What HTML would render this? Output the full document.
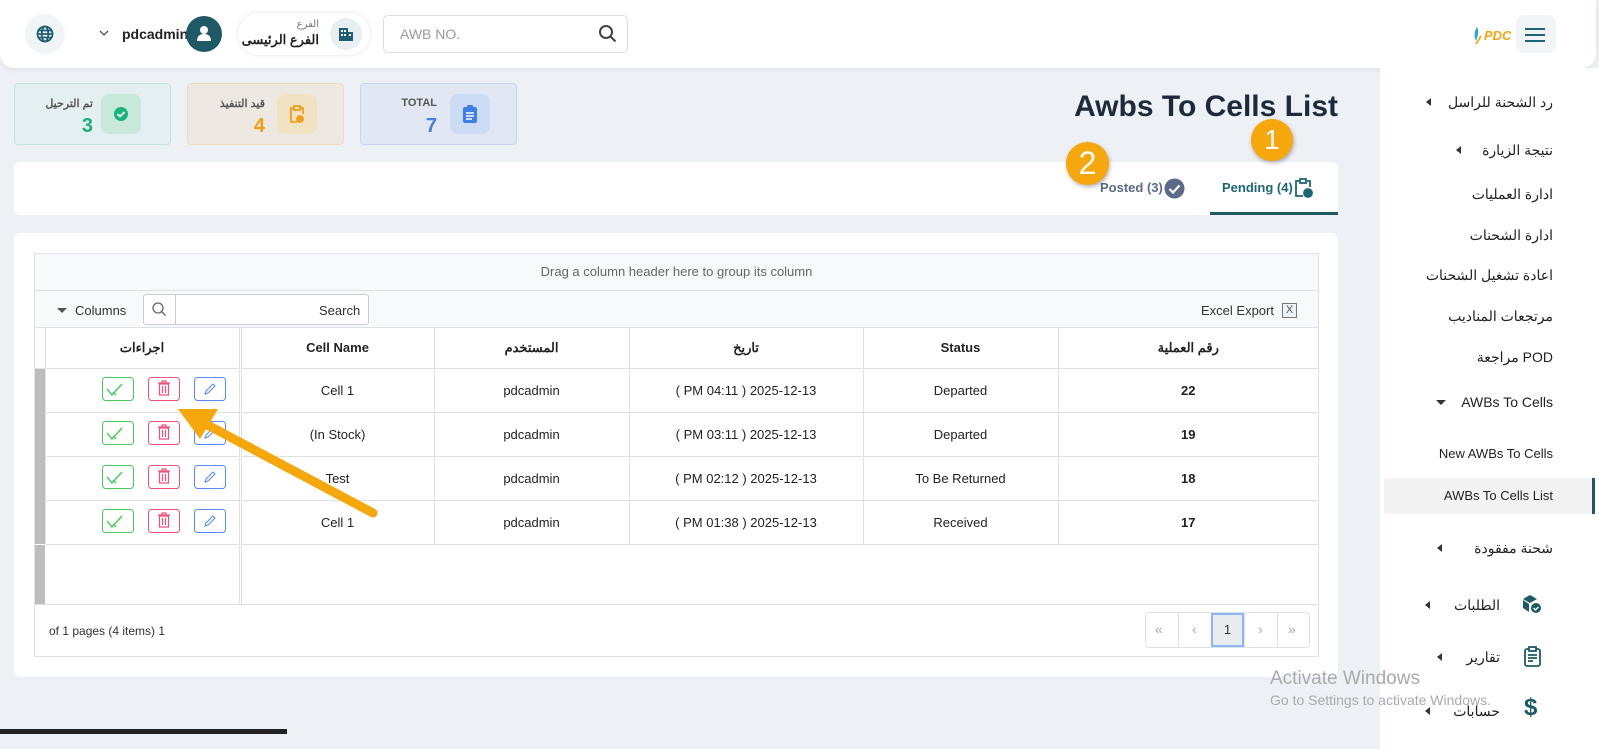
<!DOCTYPE html>
<html><head><meta charset="utf-8"><style>
*{box-sizing:border-box;margin:0;padding:0}
body{width:1599px;height:749px;overflow:hidden;background:#edf0f5;font-family:"Liberation Sans","Noto Sans CJK SC",sans-serif;position:relative;color:#222}
.a{position:absolute}
.hdr{left:0;top:0;width:1596px;height:68px;background:#fff;border-radius:0 0 14px 14px;box-shadow:0 2px 6px rgba(0,0,0,.06)}
.side{left:1380px;top:68px;width:219px;height:681px;background:#fff}
.mi{position:absolute;right:46px;font-size:14px;color:#222;white-space:nowrap}
.tri{position:absolute;width:0;height:0;border-top:4px solid transparent;border-bottom:4px solid transparent;border-right:5px solid #333}
.card{border-radius:4px;height:62px;top:83px;width:157px}
.lbl{font-size:11px;font-weight:bold;color:#555;text-align:right}
.val{font-size:20px;font-weight:bold;text-align:right}
.ib{position:absolute;width:40px;height:40px;border-radius:8px;top:11px}
.grid td,.grid th{border-right:1px solid #dee2e6;border-bottom:1px solid #dee2e6;text-align:center;font-size:13px}
</style></head><body>
<div class="a hdr"></div>
<div class="a" style="left:25px;top:14px;width:40px;height:40px;border-radius:50%;background:#f1f5f7"></div>
<svg class="a" style="left:36px;top:25px" width="18" height="18" viewBox="0 0 18 18" fill="none" stroke="#1f5f73" stroke-width="1.8"><circle cx="9" cy="9" r="7.5"/><ellipse cx="9" cy="9" rx="3.3" ry="7.5"/><path d="M1.5 9h15M2.5 5.5h13M2.5 12.5h13"/></svg>
<svg class="a" style="left:99px;top:30px" width="10" height="7"><path d="M1 1l4 4 4-4" fill="none" stroke="#555" stroke-width="1.3"/></svg>
<div class="a" style="left:122px;top:26px;font-size:14px;font-weight:bold">pdcadmin</div>
<div class="a" style="left:186px;top:16px;width:36px;height:36px;border-radius:50%;background:#1d5a66"></div>
<svg class="a" style="left:196px;top:25px" width="16" height="17"><circle cx="8" cy="5" r="4" fill="#fff"/><path d="M1 16c0-5 3-7 7-7s7 2 7 7z" fill="#fff"/></svg>
<div class="a" style="left:238px;top:13px;width:132px;height:42px;border-radius:21px;background:#fff;box-shadow:0 0 4px rgba(0,0,0,.12)"></div>
<div class="a" style="left:248px;top:19px;width:71px;text-align:right;font-size:10px;color:#777">الفرع</div>
<div class="a" style="left:240px;top:32px;width:79px;text-align:right;font-size:13px;font-weight:bold">الفرع الرئيسى</div>
<div class="a" style="left:330px;top:18px;width:32px;height:32px;border-radius:50%;background:#e7eff3"></div>
<svg class="a" style="left:339px;top:27px" width="14" height="14"><rect x="0" y="1" width="9" height="13" fill="#1f5f73"/><rect x="9" y="5" width="5" height="9" fill="#1f5f73"/><g fill="#fff"><rect x="2" y="3" width="2" height="2"/><rect x="5" y="3" width="2" height="2"/><rect x="2" y="7" width="2" height="2"/><rect x="5" y="7" width="2" height="2"/><rect x="10" y="7" width="2" height="2"/></g></svg>
<div class="a" style="left:383px;top:15px;width:245px;height:38px;border:1px solid #ddd;border-radius:5px;background:#fff"></div>
<div class="a" style="left:400px;top:26px;font-size:14px;color:#999">AWB NO.</div>
<svg class="a" style="left:598px;top:24px" width="19" height="19" fill="none" stroke="#444" stroke-width="2"><circle cx="8" cy="8" r="6"/><path d="M12.5 12.5l5 5"/></svg>
<svg class="a" style="left:1472px;top:26px" width="25" height="20"><path d="M5 1C2 5 2 11 4 15 6 10 7 5 5 1z" fill="#2aa8cf"/><path d="M3 18l5-8h2l-5 8z" fill="#f2a612"/></svg>
<div class="a" style="left:1484px;top:28px;font-size:13px;font-weight:bold;font-style:italic;color:#f2a612">PDC</div>
<div class="a" style="left:1516px;top:15px;width:40px;height:38px;border-radius:8px;background:#f1f5f7"></div>
<div class="a" style="left:1525px;top:28px;width:20px;height:2px;background:#1d6675;box-shadow:0 6px 0 #1d6675,0 12px 0 #1d6675"></div>

<!-- stat cards -->
<div class="a card" style="left:14px;background:#e3eff0;border:1px solid #bfe6d9"></div>
<div class="a lbl" style="left:20px;top:97px;width:73px">تم الترحيل</div>
<div class="a val" style="left:20px;top:115px;width:73px;color:#1bae7a">3</div>
<div class="ib" style="left:101px;top:94px;background:#c9e8dc"></div>
<svg class="a" style="left:113px;top:106px" width="16" height="16"><circle cx="8" cy="8" r="7" fill="#19b37c"/><path d="M4.5 8l2.5 2.5 4.5-4.5" stroke="#fff" stroke-width="1.8" fill="none"/></svg>
<div class="a card" style="left:187px;background:#ede9e2;border:1px solid #f0dcb8"></div>
<div class="a lbl" style="left:190px;top:97px;width:75px">قيد التنفيذ</div>
<div class="a val" style="left:190px;top:115px;width:75px;color:#f29d14">4</div>
<div class="ib" style="left:277px;top:94px;background:#f2e2c4"></div>
<svg class="a" style="left:290px;top:105px" width="14" height="18" fill="none" stroke="#f29d14" stroke-width="1.8"><path d="M4 3H1v14h6M10 3h3v6"/><rect x="4" y="1" width="6" height="4"/><circle cx="10" cy="14" r="3" fill="#f29d14"/></svg>
<div class="a card" style="left:360px;background:#e2e8f3;border:1px solid #c5d6f3"></div>
<div class="a lbl" style="left:365px;top:97px;width:72px">TOTAL</div>
<div class="a val" style="left:365px;top:115px;width:72px;color:#3f7fe6">7</div>
<div class="ib" style="left:450px;top:94px;background:#ccdcf5"></div>
<svg class="a" style="left:463px;top:105px" width="14" height="18"><rect x="0" y="2" width="14" height="16" rx="2" fill="#3f7fe6"/><rect x="4" y="0" width="6" height="4" rx="1" fill="#3f7fe6"/><path d="M3 8h8M3 11h8M3 14h6" stroke="#fff" stroke-width="1.4"/></svg>

<div class="a" style="right:261px;top:90px;font-size:30px;font-weight:bold;color:#1e2a3b">Awbs To Cells List</div>

<!-- tabs -->
<div class="a" style="left:14px;top:162px;width:1324px;height:53px;background:#fff;border-radius:6px"></div>
<div class="a" style="left:1210px;top:212px;width:128px;height:3px;background:#1d5a66"></div>
<div class="a" style="left:1222px;top:180px;font-size:13px;font-weight:bold;color:#1d6675">Pending (4)</div>
<svg class="a" style="left:1295px;top:178px" width="18" height="20" fill="none" stroke="#1d6675" stroke-width="1.8"><path d="M4 3H1v15h7M12 3h3v6"/><rect x="5" y="1" width="6" height="4"/><circle cx="13" cy="15" r="4" fill="#1d6675"/></svg>
<div class="a" style="left:1100px;top:180px;font-size:13px;font-weight:bold;color:#5b6a8a">Posted (3)</div>
<svg class="a" style="left:1164px;top:178px" width="21" height="21"><circle cx="10.5" cy="10.5" r="10" fill="#5b6a8a"/><path d="M5.5 11l3.5 3.5 6.5-7" stroke="#fff" stroke-width="2.2" fill="none"/></svg>
<div class="a" style="left:1251px;top:119px;width:42px;height:42px;border-radius:50%;background:#f5a70c;box-shadow:1px 2px 4px rgba(0,0,0,.3);color:#fff;font-size:28px;text-align:center;line-height:42px">1</div>
<div class="a" style="left:1066px;top:142px;width:43px;height:43px;border-radius:50%;background:#f5a70c;box-shadow:1px 2px 4px rgba(0,0,0,.3);color:#fff;font-size:32px;text-align:center;line-height:43px">2</div>

<!-- grid -->
<div class="a" style="left:14px;top:233px;width:1324px;height:444px;background:#fff;border-radius:6px"></div>
<div class="a" style="left:34px;top:253px;width:1285px;height:404px;border:1px solid #dee2e6;background:#fff"></div>
<div class="a" style="left:35px;top:254px;width:1283px;height:74px;background:#f8f9fa;border-bottom:1px solid #dee2e6"></div>
<div class="a" style="left:35px;top:290px;width:1283px;height:1px;background:#dee2e6"></div>
<div class="a" style="left:35px;top:264px;width:1283px;text-align:center;font-size:13px;color:#666">Drag a column header here to group its column</div>
<div class="a" style="left:57px;top:308px;border-left:5px solid transparent;border-right:5px solid transparent;border-top:5px solid #555"></div>
<div class="a" style="left:75px;top:303px;font-size:13px;color:#333">Columns</div>
<div class="a" style="left:143px;top:294px;width:226px;height:31px;border:1px solid #ccc;border-radius:3px;background:#fff"></div>
<div class="a" style="left:175px;top:295px;width:1px;height:29px;background:#ccc"></div>
<svg class="a" style="left:152px;top:302px" width="15" height="15" fill="none" stroke="#666" stroke-width="1.3"><circle cx="6" cy="6" r="5"/><path d="M9.5 9.5l4 4"/></svg>
<div class="a" style="left:319px;top:303px;font-size:13px;color:#333">Search</div>
<div class="a" style="left:1201px;top:303px;font-size:13px;color:#333">Excel Export</div>
<div class="a" style="left:1282px;top:303px;width:15px;height:15px;border:1px solid #777;font-size:11px;text-align:center;line-height:13px;color:#555;background:#eef3f8">X</div>
<table class="a grid" style="left:35px;top:328px;width:1283px;border-collapse:collapse">
<tr style="height:40px"><th style="width:10px"></th><th style="width:195px;border-right:3px double #dee2e6">اجراءات</th><th style="width:194px">Cell Name</th><th style="width:195px">المستخدم</th><th style="width:234px">تاريخ</th><th style="width:195px">Status</th><th style="border-right:0">رقم العملية</th></tr>
<tr style="height:44px"><td style="background:#bdbdbd;border-bottom:0"></td><td style="border-right:3px double #dee2e6"></td><td>Cell 1</td><td>pdcadmin</td><td>( PM 04:11 ) 2025-12-13</td><td>Departed</td><td style="border-right:0;font-weight:bold">22</td></tr>
<tr style="height:44px"><td style="background:#bdbdbd;border-bottom:0"></td><td style="border-right:3px double #dee2e6"></td><td>(In Stock)</td><td>pdcadmin</td><td>( PM 03:11 ) 2025-12-13</td><td>Departed</td><td style="border-right:0;font-weight:bold">19</td></tr>
<tr style="height:44px"><td style="background:#bdbdbd;border-bottom:0"></td><td style="border-right:3px double #dee2e6"></td><td>Test</td><td>pdcadmin</td><td>( PM 02:12 ) 2025-12-13</td><td>To Be Returned</td><td style="border-right:0;font-weight:bold">18</td></tr>
<tr style="height:44px"><td style="background:#bdbdbd;border-bottom:0"></td><td style="border-right:3px double #dee2e6"></td><td>Cell 1</td><td>pdcadmin</td><td>( PM 01:38 ) 2025-12-13</td><td>Received</td><td style="border-right:0;font-weight:bold">17</td></tr>
</table>
<div class="a" style="left:35px;top:545px;width:10px;height:59px;background:#bdbdbd"></div>
<div class="a" style="left:239px;top:545px;width:3px;height:59px;border-left:1px solid #dee2e6;border-right:1px solid #dee2e6"></div>
<div class="a" style="left:35px;top:604px;width:1283px;height:1px;background:#dee2e6"></div>
<div class="a" style="left:49px;top:624px;font-size:12px;color:#333">of 1 pages (4 items) 1</div>
<div class="a" style="left:1145px;top:612px;width:165px;height:36px;border:1px solid #dee2e6;border-radius:4px;background:#fff"></div>
<div class="a" style="left:1178px;top:613px;width:1px;height:34px;background:#dee2e6;box-shadow:33px 0 0 #dee2e6,66px 0 0 #dee2e6,99px 0 0 #dee2e6"></div>
<div class="a" style="left:1211px;top:613px;width:33px;height:34px;background:#e9ecef;border:2px solid #8fb4f5;text-align:center;line-height:30px;font-size:13px;color:#333">1</div>
<div class="a" style="left:1155px;top:621px;font-size:14px;color:#aaa">&laquo;</div>
<div class="a" style="left:1192px;top:621px;font-size:14px;color:#aaa">&lsaquo;</div>
<div class="a" style="left:1258px;top:621px;font-size:14px;color:#aaa">&rsaquo;</div>
<div class="a" style="left:1288px;top:621px;font-size:14px;color:#aaa">&raquo;</div>

<!-- action buttons -->
<svg class="a" style="left:100px;top:376px" width="130" height="160">
<g id="r"><rect x="2.5" y="1.5" width="31" height="23" rx="3" fill="#fff" stroke="#4bc95e"/><path d="M7 13l5 6 10-11M12 19l10-11M13 16l3 3" stroke="#4bc95e" stroke-width="1.4" fill="none"/>
<rect x="48.5" y="1.5" width="31" height="23" rx="3" fill="#fff" stroke="#f0507a"/><path d="M58 7h12M62 7V5h4v2M59.5 8h9v11h-9zM62.5 10v7M65.5 10v7" stroke="#f0507a" stroke-width="1.2" fill="none"/>
<rect x="94.5" y="1.5" width="31" height="23" rx="3" fill="#fff" stroke="#5b8af5"/><path d="M105 18l1-3 7-7 2 2-7 7z" stroke="#5b8af5" stroke-width="1.1" fill="none"/></g>
<use href="#r" y="44"/><use href="#r" y="88"/><use href="#r" y="132"/>
</svg>
<!-- arrow -->
<svg class="a" style="left:170px;top:400px" width="215" height="125"><path d="M203 113L30 21" stroke="#f5a70c" stroke-width="9" stroke-linecap="round"/><path d="M8 9l40 0-18 30z" fill="#f5a70c"/></svg>

<!-- sidebar -->
<div class="a side"></div>
<div class="a" style="left:1384px;top:478px;width:211px;height:36px;background:#f3f3f3;border-right:3px solid #1d5a66"></div>
<div class="mi" style="top:94px">رد الشحنة للراسل</div><div class="tri" style="left:1426px;top:98px"></div>
<div class="mi" style="top:142px">نتيجة الزيارة</div><div class="tri" style="left:1456px;top:146px"></div>
<div class="mi" style="top:186px">ادارة العمليات</div>
<div class="mi" style="top:227px">ادارة الشحنات</div>
<div class="mi" style="top:267px">اعادة تشغيل الشحنات</div>
<div class="mi" style="top:308px">مرتجعات المناديب</div>
<div class="mi" style="top:349px">مراجعة POD</div>
<div class="mi" style="top:394px">AWBs To Cells</div><div class="a" style="left:1436px;top:400px;border-left:5px solid transparent;border-right:5px solid transparent;border-top:5px solid #333"></div>
<div class="mi" style="top:446px;font-size:13px">New AWBs To Cells</div>
<div class="mi" style="top:488px;font-size:13px">AWBs To Cells List</div>
<div class="mi" style="top:540px">شحنة مفقودة</div><div class="tri" style="left:1437px;top:544px"></div>
<div class="mi" style="top:597px;right:99px">الطلبات</div><div class="tri" style="left:1425px;top:601px"></div>
<div class="mi" style="top:649px;right:99px">تقارير</div><div class="tri" style="left:1437px;top:653px"></div>
<div class="mi" style="top:703px;right:99px">حسابات</div><div class="tri" style="left:1425px;top:707px"></div>
<svg class="a" style="left:1522px;top:594px" width="20" height="20"><path d="M1 5l7-4 7 4-7 4z" fill="#1d5a66"/><path d="M1 6l6 4v8l-6-4z" fill="#1d5a66"/><circle cx="14" cy="14" r="5" fill="#1d5a66"/><path d="M11.5 14l2 2 3-3" stroke="#fff" stroke-width="1.3" fill="none"/></svg>
<svg class="a" style="left:1524px;top:646px" width="17" height="21" fill="none" stroke="#1d5a66" stroke-width="1.8"><rect x="1" y="3" width="15" height="17" rx="2"/><rect x="5" y="1" width="7" height="4" fill="#fff"/><path d="M4 9h9M4 12h9M4 15h5"/></svg>
<div class="a" style="left:1524px;top:694px;font-size:24px;font-weight:bold;color:#1d5a66">$</div>
<div class="a" style="left:1270px;top:668px;font-size:19px;color:#aaa">Activate Windows</div>
<div class="a" style="left:1270px;top:692px;font-size:14px;color:#aaa">Go to Settings to activate Windows.</div>
<div class="a" style="left:0;top:729px;width:287px;height:5px;background:#222"></div>
</body></html>
